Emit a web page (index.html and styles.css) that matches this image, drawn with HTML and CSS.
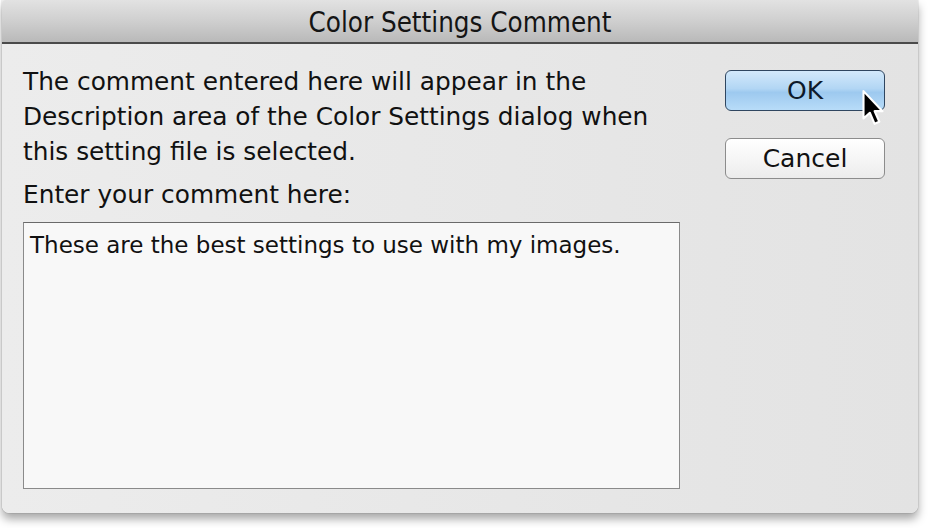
FILE: index.html
```html
<!DOCTYPE html>
<html>
<head>
<meta charset="utf-8">
<link rel="stylesheet" href="styles.css">
</head>
<body>
<div class="window">
  <div class="titlebar">Color Settings Comment</div>
  <div class="content">
    <div class="main">
      <p class="desc">The comment entered here will appear in the Description area of the Color Settings dialog when this setting file is selected.</p>
      <p class="label">Enter your comment here:</p>
      <div class="textarea">These are the best settings to use with my images.</div>
    </div>
    <div class="buttons">
      <div class="btn ok">OK
        <svg class="cursor" width="24" height="38" viewBox="0 0 22 36">
          <path d="M2 2 L2 28 L8 22.5 L12.5 33 L17 31 L12.5 21 L20 21 Z" fill="#000" stroke="#fff" stroke-width="2" stroke-linejoin="round"/>
        </svg>
      </div>
      <div class="btn cancel">Cancel</div>
    </div>
  </div>
</div>
</body>
</html>
```
FILE: styles.css
```css
html, body {
  margin: 0;
  padding: 0;
  background: #ffffff;
}
body {
  width: 932px;
  height: 528px;
  overflow: hidden;
  font-family: "DejaVu Sans", "Liberation Sans", sans-serif;
}
.window {
  margin-left: 2px;
  width: 916px;
  height: 513px;
  background: linear-gradient(to right, #ececec, #e3e3e3);
  border-radius: 0 0 7px 7px;
  box-shadow: 0 6px 10px rgba(0,0,0,0.35), 0 0 1px rgba(0,0,0,0.6);
  display: flex;
  flex-direction: column;
  overflow: hidden;
}
.titlebar {
  height: 42px;
  border-bottom: 2px solid #4a4a4a;
  background: linear-gradient(to bottom, #e2e2e2 0%, #cfcfcf 50%, #b9b9b9 100%);
  border-radius: 4px 4px 0 0;
  text-align: center;
  font-family: "DejaVu Sans Condensed", "DejaVu Sans", sans-serif;
  font-stretch: condensed;
  font-size: 27.5px;
  line-height: 44px;
  color: #141414;
}
.content {
  display: flex;
  padding: 20px 0 0 21px;
  gap: 45px;
}
.main {
  width: 657px;
  display: flex;
  flex-direction: column;
}
.desc {
  margin: 0;
  font-size: 24.8px;
  line-height: 35px;
  color: #111;
}
.label {
  margin: 8px 0 0 0;
  font-size: 24.8px;
  line-height: 35px;
  color: #111;
}
.textarea {
  margin-top: 10px;
  height: 251px;
  border: 1px solid #8a8a8a;
  border-top-color: #6a6a6a;
  background: #f8f8f8;
  padding: 7px 6px;
  font-size: 23px;
  line-height: 30px;
  color: #111;
}
.buttons {
  padding-top: 6px;
  display: flex;
  flex-direction: column;
  gap: 27px;
}
.btn {
  position: relative;
  width: 158px;
  height: 39px;
  border-radius: 6px;
  text-align: center;
  font-size: 25px;
  line-height: 39px;
  color: #111;
}
.ok {
  border: 1px solid #2f4660;
  background: linear-gradient(to bottom, #d3e9fb 0%, #b2d6f4 45%, #9dc9ef 55%, #b8dcf8 100%);
  color: #0e1a2a;
}
.cancel {
  border: 1px solid #8c8c8c;
  background: linear-gradient(to bottom, #ffffff 0%, #f6f6f6 50%, #ececec 100%);
}
.cursor {
  position: absolute;
  left: 135px;
  top: 18px;
}
```
